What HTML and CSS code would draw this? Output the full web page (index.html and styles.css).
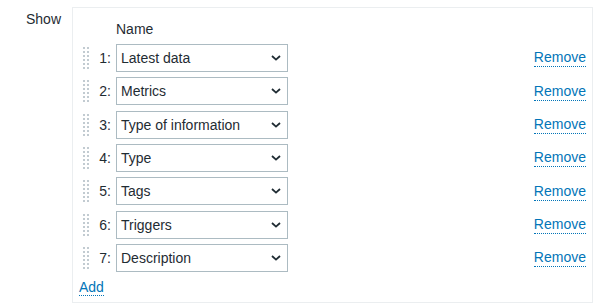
FILE: index.html
```html
<!DOCTYPE html>
<html lang="en">
<head>
    <meta charset="UTF-8">
    <meta name="viewport" content="width=device-width, initial-scale=1.0">
    <title>Show columns</title>
    <link rel="stylesheet" href="styles.css">
</head>
<body>

    <div class="form-row">
        <label class="form-label">Show</label>

        <div class="form-field">
            <div class="list-row list-header">
                <span></span>
                <span></span>
                <span class="col-name">Name</span>
                <span></span>
                <span></span>
            </div>

            <div class="list-row">
                <span class="drag-handle"></span>
                <span class="row-num">1:</span>
                <div class="select">
                    <span>Latest data</span>
                    <svg width="10" height="6" viewBox="0 0 10 6"><path d="M1 1 L5 4.6 L9 1" fill="none" stroke="#1f2c33" stroke-width="1.8"/></svg>
                </div>
                <span></span>
                <a href="#" class="link-action">Remove</a>
            </div>

            <div class="list-row">
                <span class="drag-handle"></span>
                <span class="row-num">2:</span>
                <div class="select">
                    <span>Metrics</span>
                    <svg width="10" height="6" viewBox="0 0 10 6"><path d="M1 1 L5 4.6 L9 1" fill="none" stroke="#1f2c33" stroke-width="1.8"/></svg>
                </div>
                <span></span>
                <a href="#" class="link-action">Remove</a>
            </div>

            <div class="list-row">
                <span class="drag-handle"></span>
                <span class="row-num">3:</span>
                <div class="select">
                    <span>Type of information</span>
                    <svg width="10" height="6" viewBox="0 0 10 6"><path d="M1 1 L5 4.6 L9 1" fill="none" stroke="#1f2c33" stroke-width="1.8"/></svg>
                </div>
                <span></span>
                <a href="#" class="link-action">Remove</a>
            </div>

            <div class="list-row">
                <span class="drag-handle"></span>
                <span class="row-num">4:</span>
                <div class="select">
                    <span>Type</span>
                    <svg width="10" height="6" viewBox="0 0 10 6"><path d="M1 1 L5 4.6 L9 1" fill="none" stroke="#1f2c33" stroke-width="1.8"/></svg>
                </div>
                <span></span>
                <a href="#" class="link-action">Remove</a>
            </div>

            <div class="list-row">
                <span class="drag-handle"></span>
                <span class="row-num">5:</span>
                <div class="select">
                    <span>Tags</span>
                    <svg width="10" height="6" viewBox="0 0 10 6"><path d="M1 1 L5 4.6 L9 1" fill="none" stroke="#1f2c33" stroke-width="1.8"/></svg>
                </div>
                <span></span>
                <a href="#" class="link-action">Remove</a>
            </div>

            <div class="list-row">
                <span class="drag-handle"></span>
                <span class="row-num">6:</span>
                <div class="select">
                    <span>Triggers</span>
                    <svg width="10" height="6" viewBox="0 0 10 6"><path d="M1 1 L5 4.6 L9 1" fill="none" stroke="#1f2c33" stroke-width="1.8"/></svg>
                </div>
                <span></span>
                <a href="#" class="link-action">Remove</a>
            </div>

            <div class="list-row">
                <span class="drag-handle"></span>
                <span class="row-num">7:</span>
                <div class="select">
                    <span>Description</span>
                    <svg width="10" height="6" viewBox="0 0 10 6"><path d="M1 1 L5 4.6 L9 1" fill="none" stroke="#1f2c33" stroke-width="1.8"/></svg>
                </div>
                <span></span>
                <a href="#" class="link-action">Remove</a>
            </div>

            <div class="list-footer">
                <a href="#" class="link-action">Add</a>
            </div>
        </div>
    </div>

</body>
</html>
```

FILE: styles.css
```css
body {
    font-family: "Liberation Sans", Arial, sans-serif;
    font-size: 14px;
    line-height: 18px;
    color: #1f2c33;
    background-color: #fff;
    margin: 0;
}

.form-row {
    display: flex;
    align-items: flex-start;
    padding-top: 7px;
}

.form-label {
    width: 61px;
    text-align: right;
    margin-top: 3px;
    margin-right: 11px;
}

.form-field {
    width: 504px;
    height: 294px;
    border: 1px solid #ebeef0;
    padding: 0 6px 0 9px;
    display: flex;
    flex-direction: column;
}

.list-row {
    display: grid;
    grid-template-columns: 8px 21px 177px 1fr auto;
    align-items: center;
    height: 33.333px;
}

.list-row .row-num {
    text-align: right;
}

.list-header {
    height: 21.333px;
    padding-top: 12px;
    align-items: start;
}

.list-header .col-name {
    margin-left: 5px;
}

.drag-handle {
    width: 8px;
    height: 24px;
    background-image: radial-gradient(circle, #c2cbd1 1px, transparent 1.3px);
    background-size: 4px 4px;
}

.select {
    display: flex;
    align-items: center;
    justify-content: space-between;
    height: 28px;
    width: 172px;
    box-sizing: border-box;
    border: 1px solid #acbbc2;
    padding: 0 6px 0 4px;
    margin-left: 5px;
}

.link-action {
    color: #0275b8;
    text-decoration: none;
    border-bottom: 1px dotted #0275b8;
}

.list-footer {
    margin-top: 3px;
    margin-left: -3px;
}
```
